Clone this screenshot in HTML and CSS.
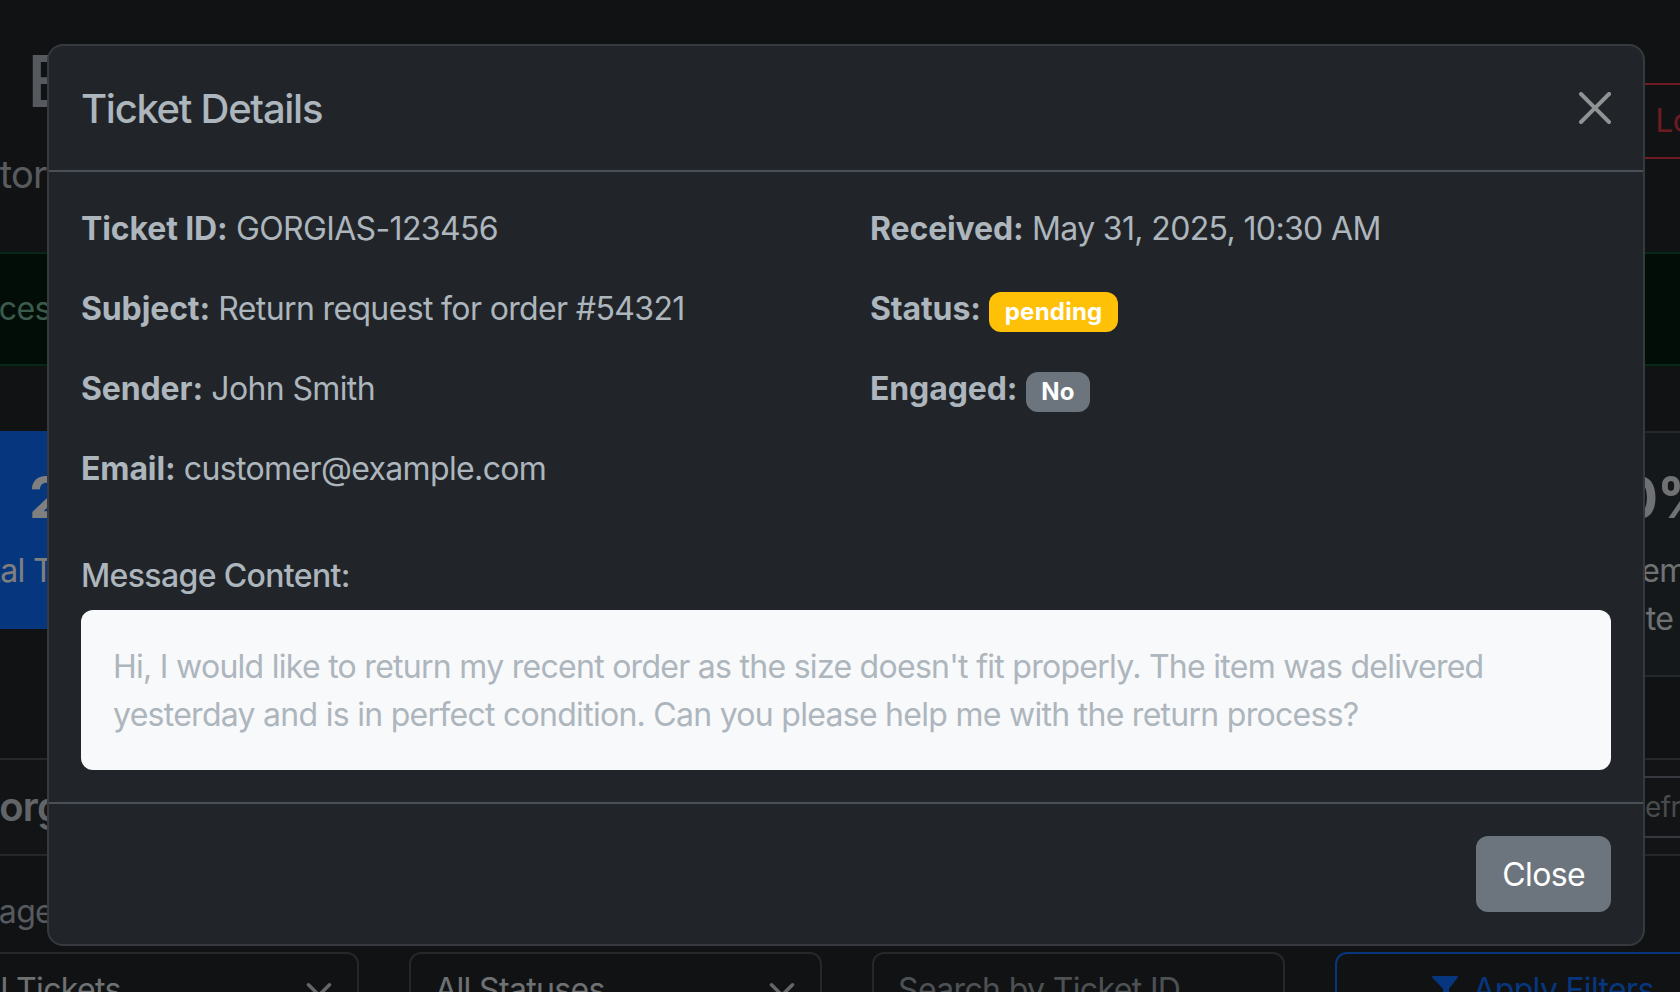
FILE: index.html
```html
<!DOCTYPE html>
<html lang="en">
<head>
<meta charset="utf-8">
<title>Ticket Details</title>
<link rel="stylesheet" href="styles.css">
</head>
<body>
<div class="page">
  <header class="topbar">
    <div class="brand">
      <h1 class="brand-title">Email Engagement Dashboard</h1>
      <p class="brand-sub">Monitor Gorgias tickets and customer engagement in real time</p>
    </div>
    <button class="btn-logout" type="button">
      <svg class="ico" viewBox="0 0 16 16" fill="currentColor"><path d="M10 12.5a.5.5 0 0 1-.5.5h-8a.5.5 0 0 1-.5-.5v-9a.5.5 0 0 1 .5-.5h8a.5.5 0 0 1 .5.5v2a.5.5 0 0 0 1 0v-2A1.5 1.5 0 0 0 9.5 2h-8A1.5 1.5 0 0 0 0 3.5v9A1.5 1.5 0 0 0 1.5 14h8a1.5 1.5 0 0 0 1.5-1.5v-2a.5.5 0 0 0-1 0z"/><path d="M15.854 8.354a.5.5 0 0 0 0-.708l-3-3a.5.5 0 0 0-.708.708L14.293 7.5H5.5a.5.5 0 0 0 0 1h8.793l-2.147 2.146a.5.5 0 0 0 .708.708z"/></svg>
      <span>Logout</span>
    </button>
  </header>

  <div class="alert-ok">Successfully connected to Gorgias. New tickets are being monitored automatically.</div>

  <section class="stats">
    <div class="stat stat-primary"><div class="stat-num">2</div><div class="stat-label">Total Tickets</div></div>
    <div class="stat stat-warning"><div class="stat-num">1</div><div class="stat-label">Pending</div></div>
    <div class="stat stat-success"><div class="stat-num">1</div><div class="stat-label">Replied</div></div>
    <div class="stat stat-info"><div class="stat-num">0</div><div class="stat-label">Engaged</div></div>
    <div class="stat stat-danger"><div class="stat-num">0</div><div class="stat-label">Failed</div></div>
    <div class="stat stat-plain"><div class="stat-num">0.0%</div><div class="stat-label">Engagement Rate</div></div>
  </section>

  <section class="card">
    <div class="card-head">
      <h5 class="card-title">Gorgias Tickets</h5>
      <button class="btn-refresh" type="button">
        <svg class="ico-sm" viewBox="0 0 16 16" fill="currentColor"><path d="M8 3a5 5 0 1 0 4.546 2.914.5.5 0 0 1 .908-.417A6 6 0 1 1 8 2z"/><path d="M8 4.466V.534a.25.25 0 0 1 .41-.192l2.36 1.966c.12.1.12.284 0 .384L8.41 4.658A.25.25 0 0 1 8 4.466"/></svg>
        <span>Refresh</span>
      </button>
    </div>
    <div class="card-body">
      <p class="hint">Page 1 of 1 &middot; showing the latest tickets</p>
      <div class="filters">
        <div class="field">All Tickets<svg class="chev" viewBox="0 0 16 16"><path d="m2 5 6 6 6-6"/></svg></div>
        <div class="field">All Statuses<svg class="chev" viewBox="0 0 16 16"><path d="m2 5 6 6 6-6"/></svg></div>
        <div class="field field-input">Search by Ticket ID</div>
        <button class="btn-apply" type="button">
          <svg class="ico" viewBox="0 0 16 16" fill="currentColor"><path d="M1.5 1.5A.5.5 0 0 1 2 1h12a.5.5 0 0 1 .39.812L10 7.32V14.5a.5.5 0 0 1-.724.447l-2-1A.5.5 0 0 1 7 13.5V7.32L1.61 1.812A.5.5 0 0 1 1.5 1.5"/></svg>
          <span>Apply Filters</span>
        </button>
      </div>
    </div>
  </section>
</div>

<div class="backdrop"></div>

<div class="modal">
  <div class="modal-dialog">
    <div class="modal-header">
      <h5 class="modal-title">Ticket Details</h5>
      <button class="btn-close" type="button" aria-label="Close">
        <svg viewBox="0 0 16 16"><path d="M.293.293a1 1 0 0 1 1.414 0L8 6.586 14.293.293a1 1 0 1 1 1.414 1.414L9.414 8l6.293 6.293a1 1 0 0 1-1.414 1.414L8 9.414l-6.293 6.293a1 1 0 0 1-1.414-1.414L6.586 8 .293 1.707a1 1 0 0 1 0-1.414"/></svg>
      </button>
    </div>
    <div class="modal-body">
      <div class="details">
        <div class="details-col">
          <p><strong>Ticket ID:</strong> GORGIAS-123456</p>
          <p><strong>Subject:</strong> Return request for order #54321</p>
          <p><strong>Sender:</strong> John Smith</p>
          <p><strong>Email:</strong> customer@example.com</p>
        </div>
        <div class="details-col">
          <p><strong>Received:</strong> May 31, 2025, 10:30 AM</p>
          <p><strong>Status:</strong> <span class="badge badge-warning">pending</span></p>
          <p><strong>Engaged:</strong> <span class="badge badge-secondary">No</span></p>
        </div>
      </div>
      <h6 class="msg-title">Message Content:</h6>
      <div class="msg-box">Hi, I would like to return my recent order as the size doesn't fit properly. The item was delivered yesterday and is in perfect condition. Can you please help me with the return process?</div>
    </div>
    <div class="modal-footer">
      <button class="btn-secondary" type="button">Close</button>
    </div>
  </div>
</div>
</body>
</html>
```

FILE: styles.css
```css
* {
  box-sizing: border-box;
  letter-spacing: -0.02em;
}

html, body {
  margin: 0;
  height: 100%;
}

body {
  background: #212529;
  color: #adb5bd;
  font-family: Inter, "Noto Sans", sans-serif;
  overflow: hidden;
}

button {
  font-family: inherit;
}

/* ---------- background dashboard ---------- */
.page {
  width: 1680px;
  height: 992px;
  overflow: hidden;
}

.topbar {
  display: flex;
  justify-content: space-between;
  align-items: center;
  width: 1756px;
  margin-left: 27px;
  padding-top: 38px;
}

.brand-title {
  margin: 0 0 20px;
  font-size: 72px;
  font-weight: 500;
  line-height: 1.2;
  color: #adb5bd;
  white-space: nowrap;
}

.brand-sub {
  margin: 0 0 0 -113px;
  font-size: 38px;
  line-height: 60px;
  color: #b3b9bf;
  white-space: nowrap;
}

.btn-logout {
  display: flex;
  align-items: center;
  gap: 10px;
  padding: 12px 24px;
  border: 2px solid #dc3545;
  border-radius: 12px;
  background: transparent;
  color: #dc3545;
  font-size: 32px;
  line-height: 48px;
}

.ico {
  width: 32px;
  height: 32px;
  flex: none;
}

.ico-sm {
  width: 28px;
  height: 28px;
  flex: none;
}

.alert-ok {
  width: 2000px;
  margin: 48px 0 0 -90px;
  padding: 31px;
  border: 2px solid #0f5132;
  border-radius: 12px;
  background: #051b11;
  color: #75b798;
  font-size: 32px;
  line-height: 48px;
  white-space: nowrap;
}

.stats {
  display: grid;
  grid-template-columns: repeat(6, 276px);
  gap: 43px;
  align-items: start;
  margin: 65px 0 0 -92px;
}

.stat {
  padding: 32px;
  border: 2px solid #495057;
  border-radius: 12px;
  text-align: center;
  color: #fff;
}

.stat-num {
  margin-bottom: 14px;
  font-size: 56px;
  font-weight: 700;
  line-height: 1.2;
}

.stat-label {
  font-size: 32px;
  line-height: 48px;
}

.stat-primary { background: #0d6efd; border-color: #0d6efd; }
.stat-warning { background: #ffc107; border-color: #ffc107; color: #000; }
.stat-success { background: #198754; border-color: #198754; }
.stat-info { background: #0dcaf0; border-color: #0dcaf0; color: #000; }
.stat-danger { background: #dc3545; border-color: #dc3545; }
.stat-plain { background: #2b3035; color: #dee2e6; }

.card {
  width: 1842px;
  margin: 81px 0 0 -64px;
  border: 2px solid #495057;
  border-radius: 12px;
  background: #212529;
}

.card-head {
  display: flex;
  justify-content: space-between;
  align-items: center;
  padding: 16px 32px;
  border-bottom: 2px solid #495057;
  background: #25292d;
}

.card-title {
  margin: 0;
  font-size: 40px;
  font-weight: 600;
  line-height: 48px;
  color: #c4cad0;
}

.btn-refresh {
  display: flex;
  align-items: center;
  gap: 8px;
  padding: 8px 16px;
  border: 2px solid #6c757d;
  border-radius: 8px;
  background: transparent;
  color: #8f969c;
  font-size: 28px;
  line-height: 42px;
}

.card-body {
  padding: 32px;
}

.hint {
  margin: 0 0 16px 9px;
  font-size: 32px;
  line-height: 48px;
  white-space: nowrap;
}

.filters {
  display: grid;
  grid-template-columns: repeat(4, 413px);
  gap: 50px;
  margin-left: -24px;
}

.field {
  display: flex;
  justify-content: space-between;
  align-items: center;
  height: 76px;
  padding: 12px 24px;
  border: 2px solid #495057;
  border-radius: 12px;
  background: #212529;
  color: #dee2e6;
  font-size: 32px;
  line-height: 48px;
}

.field-input {
  color: #9aa2a9;
}

.chev {
  width: 28px;
  height: 28px;
  fill: none;
  stroke: #c8cdd2;
  stroke-width: 2;
  stroke-linecap: round;
  stroke-linejoin: round;
}

.btn-apply {
  display: flex;
  justify-content: center;
  align-items: center;
  gap: 12px;
  height: 76px;
  border: 2px solid #0d6efd;
  border-radius: 12px;
  background: transparent;
  color: #0d6efd;
  font-size: 32px;
  line-height: 48px;
}

/* ---------- overlay ---------- */
.backdrop {
  position: fixed;
  inset: 0;
  background: rgba(0, 0, 0, 0.5);
}

.modal {
  position: fixed;
  inset: 0;
}

.modal-dialog {
  width: 1598px;
  margin: 44px 0 0 47px;
  border: 2px solid #36393d;
  border-radius: 16px;
  background: #212529;
  color: #adb5bd;
}

.modal-header {
  display: flex;
  align-items: center;
  padding: 33px 32px 31px;
  border-bottom: 2px solid #495057;
}

.modal-title {
  margin: 0;
  font-size: 40px;
  font-weight: 500;
  line-height: 60px;
  letter-spacing: -0.032em;
}

.btn-close {
  box-sizing: content-box;
  width: 32px;
  height: 32px;
  padding: 16px;
  margin: -17px -16px -15px auto;
  border: 0;
  background: transparent;
  opacity: 0.5;
}

.btn-close svg {
  display: block;
  width: 32px;
  height: 32px;
  fill: #ffffff;
}

.modal-body {
  padding: 33px 32px 32px;
}

.details {
  display: grid;
  grid-template-columns: 1fr 1fr;
  column-gap: 48px;
}

.details p {
  margin: 0 0 32px;
  font-size: 32px;
  line-height: 48px;
}

.details strong {
  font-weight: 700;
  letter-spacing: -0.004em;
}

.badge {
  display: inline-block;
  padding: 8.4px 15.6px;
  border-radius: 12px;
  color: #fff;
  font-size: 24px;
  font-weight: 700;
  line-height: 1;
  letter-spacing: 0.01em;
  vertical-align: baseline;
}

.badge-warning { background: #ffc107; }
.badge-secondary { background: #6c757d; }

.msg-title {
  margin: 32px 0 15px;
  font-size: 32px;
  font-weight: 500;
  line-height: 1.2;
}

.msg-box {
  padding: 33px 32px 31px;
  border-radius: 12px;
  background: #f8f9fa;
  font-size: 32px;
  line-height: 48px;
  letter-spacing: -0.0225em;
}

.modal-footer {
  display: flex;
  justify-content: flex-end;
  padding: 24px;
  border-top: 2px solid #495057;
}

.btn-secondary {
  margin: 8px;
  padding: 13px 24px 11px;
  border: 2px solid #6c757d;
  border-radius: 12px;
  background: #6c757d;
  color: #fff;
  font-size: 32px;
  line-height: 48px;
}
```
